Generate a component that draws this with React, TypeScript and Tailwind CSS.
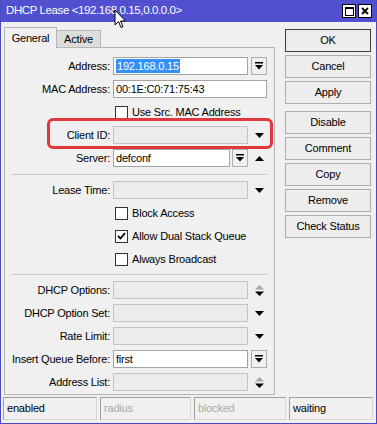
import React from 'react';

type FieldKind = 'edit' | 'disabled';

function DropButton() {
  return (
    <div className="w-[16px] h-[18px] border border-[#adadad] bg-[#f0f0f0] flex items-center justify-center shrink-0">
      <svg width="8" height="8" viewBox="0 0 8 8">
        <rect x="0" y="0" width="8" height="1.5" fill="#000" />
        <path d="M0 3 L8 3 L4 7.5 Z" fill="#000" />
      </svg>
    </div>
  );
}

function ArrowDown() {
  return (
    <svg width="9" height="5" viewBox="0 0 9 5" className="shrink-0">
      <path d="M0 0 L9 0 L4.5 5 Z" fill="#000" />
    </svg>
  );
}

function ArrowUp() {
  return (
    <svg width="9" height="5" viewBox="0 0 9 5" className="shrink-0">
      <path d="M0 5 L9 5 L4.5 0 Z" fill="#000" />
    </svg>
  );
}

function UpDown() {
  return (
    <svg width="9" height="11" viewBox="0 0 9 11" className="shrink-0">
      <path d="M0 4.5 L9 4.5 L4.5 0 Z" fill="#a8a8a8" />
      <path d="M0 6.5 L9 6.5 L4.5 11 Z" fill="#000" />
    </svg>
  );
}

function Input({ kind, width, children }: { kind: FieldKind; width: string; children?: React.ReactNode }) {
  const cls =
    kind === 'edit'
      ? 'bg-white border-[#a3a3a3]'
      : 'bg-[#ececec] border-[#c3c3c3]';
  return (
    <div className={`${width} h-[18px] border ${cls} flex items-center px-[2px] overflow-hidden whitespace-nowrap shrink-0`}>
      {children}
    </div>
  );
}

function Row({ label, children }: { label: string; children: React.ReactNode }) {
  return (
    <div className="flex items-center h-[18px]">
      <div className="w-[105px] text-right whitespace-nowrap shrink-0">{label}</div>
      <div className="ml-[3px] flex items-center">{children}</div>
    </div>
  );
}

function Check({ label, checked }: { label: string; checked?: boolean }) {
  return (
    <div className="flex items-center h-[18px] pl-[110px]">
      <div className="w-[13px] h-[13px] border border-[#333] bg-white flex items-center justify-center">
        {checked && (
          <svg width="9" height="8" viewBox="0 0 9 8">
            <path d="M1 4 L3.5 6.5 L8 1" stroke="#000" strokeWidth="1.8" fill="none" />
          </svg>
        )}
      </div>
      <span className="ml-[4px] whitespace-nowrap">{label}</span>
    </div>
  );
}

function Btn({ label, primary, extra }: { label: string; primary?: boolean; extra?: string }) {
  return (
    <div
      className={`h-[23px] flex items-center justify-center bg-[#ededed] border ${
        primary ? 'border-[#3c3c3c]' : 'border-[#adadad]'
      } ${extra ?? ''}`}
    >
      {label}
    </div>
  );
}

function Status({ text, width, dim }: { text: string; width: string; dim?: boolean }) {
  return (
    <div
      className={`${width} h-[23px] border border-t-[#a0a0a0] border-l-[#a0a0a0] border-r-[#d6d6d6] border-b-[#d6d6d6] flex items-center px-[3px] ${
        dim ? 'text-[#a8a8a8]' : 'text-black'
      }`}
    >
      {text}
    </div>
  );
}

export default function App() {
  return (
    <div className="relative w-[377px] h-[424px] flex flex-col bg-[#f0f0f0] border-x border-b border-[#4a4ac4] overflow-hidden text-[11px] tracking-[-0.2px] text-black font-['Liberation_Sans',Arial,sans-serif]">
      {/* title bar */}
      <div className="h-[22px] -mx-px bg-[#5050d0] flex items-center pl-[6px] pr-[5px] shrink-0">
        <span className="text-white text-[11.5px] tracking-[-0.4px] whitespace-nowrap">
          DHCP Lease &lt;192.168.0.15,0.0.0.0&gt;
        </span>
        <div className="ml-auto flex gap-[2px]">
          <div className="w-[14px] h-[14px] bg-white border border-black flex items-center justify-center">
            <div className="w-[9px] h-[9px] border border-black border-t-2" />
          </div>
          <div className="w-[14px] h-[14px] bg-white border border-black flex items-center justify-center">
            <svg width="8" height="8" viewBox="0 0 8 8">
              <path d="M1 1 L7 7 M7 1 L1 7" stroke="#000" strokeWidth="1.8" />
            </svg>
          </div>
        </div>
      </div>

      {/* body */}
      <div className="flex flex-1">
        <div className="ml-[3px] w-[271px] flex flex-col mt-[5px]">
          <div className="flex h-[20px] items-end">
            <div className="relative z-10 h-[21px] -mb-px w-[53px] bg-[#f0f0f0] border border-b-0 border-[#b5b5b5] flex items-center justify-center">
              General
            </div>
            <div className="h-[17px] w-[44px] bg-[#dddddd] border border-b-0 border-l-0 border-[#b5b5b5] flex items-center justify-center">
              Active
            </div>
          </div>
          <div className="h-[348px] border border-[#b5b5b5] pt-[9px] flex flex-col">
            <div className="flex flex-col gap-[5px]">
              <Row label="Address:">
                <Input kind="edit" width="w-[135px]">
                  <span className="bg-[#3390ff] text-white px-[1px] leading-[14px]">192.168.0.15</span>
                </Input>
                <div className="ml-[3px]">
                  <DropButton />
                </div>
              </Row>
              <Row label="MAC Address:">
                <Input kind="edit" width="w-[154px]">00:1E:C0:71:75:43</Input>
              </Row>
              <Check label="Use Src. MAC Address" />
              <Row label="Client ID:">
                <Input kind="disabled" width="w-[135px]" />
                <div className="ml-[7px]">
                  <ArrowDown />
                </div>
              </Row>
              <Row label="Server:">
                <Input kind="edit" width="w-[117px]">defconf</Input>
                <div className="ml-[2px]">
                  <DropButton />
                </div>
                <div className="ml-[7px]">
                  <ArrowUp />
                </div>
              </Row>
            </div>

            <div className="mx-[7px] mt-[7px] h-px bg-[#c8c8c8]" />

            <div className="flex flex-col gap-[5px] mt-[6px]">
              <Row label="Lease Time:">
                <Input kind="disabled" width="w-[135px]" />
                <div className="ml-[7px]">
                  <ArrowDown />
                </div>
              </Row>
              <Check label="Block Access" />
              <Check label="Allow Dual Stack Queue" checked />
              <Check label="Always Broadcast" />
            </div>

            <div className="mx-[7px] mt-[6px] h-px bg-[#c8c8c8]" />

            <div className="flex flex-col gap-[5px] mt-[6px]">
              <Row label="DHCP Options:">
                <Input kind="disabled" width="w-[135px]" />
                <div className="ml-[7px]">
                  <UpDown />
                </div>
              </Row>
              <Row label="DHCP Option Set:">
                <Input kind="disabled" width="w-[135px]" />
                <div className="ml-[7px]">
                  <ArrowDown />
                </div>
              </Row>
              <Row label="Rate Limit:">
                <Input kind="disabled" width="w-[135px]" />
                <div className="ml-[7px]">
                  <ArrowDown />
                </div>
              </Row>
              <Row label="Insert Queue Before:">
                <Input kind="edit" width="w-[135px]">first</Input>
                <div className="ml-[3px]">
                  <DropButton />
                </div>
              </Row>
              <Row label="Address List:">
                <Input kind="disabled" width="w-[135px]" />
                <div className="ml-[7px]">
                  <UpDown />
                </div>
              </Row>
            </div>
          </div>
        </div>

        <div className="ml-[10px] w-[86px] mt-[7px] flex flex-col gap-[3px]">
          <Btn label="OK" primary extra="h-[22px]" />
          <Btn label="Cancel" />
          <Btn label="Apply" />
          <Btn label="Disable" extra="mt-[4px]" />
          <Btn label="Comment" />
          <Btn label="Copy" />
          <Btn label="Remove" />
          <Btn label="Check Status" />
        </div>
      </div>

      {/* status bar */}
      <div className="flex gap-[3px] pl-[2px] mb-[3px] shrink-0">
        <Status text="enabled" width="w-[94px]" />
        <Status text="radius" width="w-[91px]" dim />
        <Status text="blocked" width="w-[92px]" dim />
        <Status text="waiting" width="w-[84px]" />
      </div>

      {/* red annotation around Client ID */}
      <div className="absolute left-[46px] top-[118px] w-[226px] h-[31px] border-[3px] border-[#e2383d] rounded-[6px] pointer-events-none" />

      {/* mouse pointer */}
      <svg className="absolute left-[113px] top-[9px]" width="13" height="21" viewBox="0 0 13 21">
        <path
          d="M1 1 L1 16 L4.5 12.5 L7 18.5 L9 17.6 L6.6 12 L11.5 12 Z"
          fill="#fff"
          stroke="#000"
          strokeWidth="1"
          strokeLinejoin="round"
        />
      </svg>
    </div>
  );
}
